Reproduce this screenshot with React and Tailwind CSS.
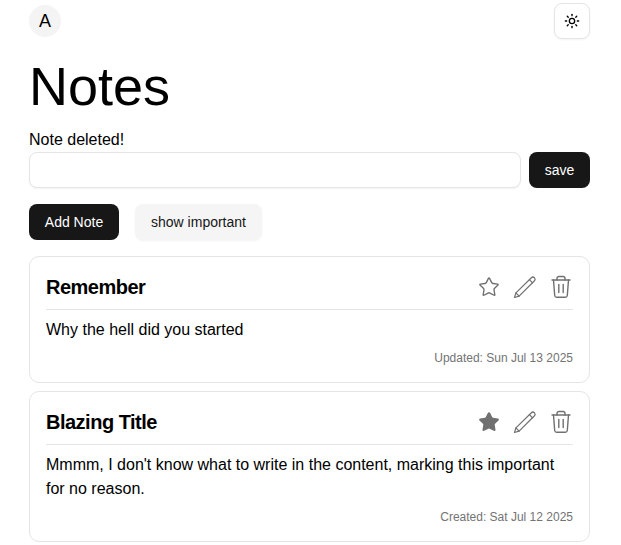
import React from 'react';
import { Sun, Star } from 'lucide-react';

const notes = [
  {
    title: 'Remember',
    content: "Why the hell did you started",
    date: 'Updated: Sun Jul 13 2025',
    important: false,
  },
  {
    title: 'Blazing Title',
    content: "Mmmm, I don't know what to write in the content, marking this important for no reason.",
    date: 'Created: Sat Jul 12 2025',
    important: true,
  },
];

const PencilIcon = () => (
  <svg width="24" height="24" viewBox="0 0 24 24" fill="none" stroke="currentColor" strokeWidth="1.2" strokeLinejoin="round" strokeLinecap="round">
    <path d="M1.5 22.5l1.4-4.6L18.4 2.7a2.2 2.2 0 0 1 3 0l.1.1a2.2 2.2 0 0 1 0 3L6.1 21.1Z" />
    <path d="M16.4 4.7l3.1 3.1" />
    <path d="M2.9 17.9l3.2 3.2" />
  </svg>
);

const TrashIcon = () => (
  <svg width="24" height="24" viewBox="0 0 24 24" fill="none" stroke="currentColor" strokeWidth="1.4" strokeLinejoin="round" strokeLinecap="round">
    <path d="M3 5h18" />
    <path d="M8 5V3.5a2 2 0 0 1 2-2h4a2 2 0 0 1 2 2V5" />
    <path d="M4.5 5l1.2 15.5a2 2 0 0 0 2 1.8h8.6a2 2 0 0 0 2-1.8L19.5 5" />
    <path d="M9.8 9.5v8" />
    <path d="M14.2 9.5v8" />
  </svg>
);

const NoteCard = ({ note }) => (
  <div className="border border-[#e5e5e5] rounded-[10px] px-4 pt-[11px] pb-4 bg-white">
    <div className="flex items-center justify-between h-[42px] pb-[4px] border-b border-[#e5e5e5]">
      <h2 className="text-[20px] font-bold tracking-tight text-black">{note.title}</h2>
      <div className="flex items-center gap-3 text-[#707070]">
        <Star className="m-px" size={22} strokeWidth={1.5} fill={note.important ? '#707070' : 'none'} />
        <PencilIcon />
        <TrashIcon />
      </div>
    </div>
    <p className="mt-2 text-[16px] leading-6 text-black">{note.content}</p>
    <p className="mt-2 text-[12px] leading-4 text-right text-[#737373]">{note.date}</p>
  </div>
);

export default function App() {
  return (
    <div className="h-[545px] overflow-hidden bg-white font-['Liberation_Sans',Arial,sans-serif] text-black">
      <div className="w-[561px] ml-[29px] pt-[3px]">
        <div className="flex items-center justify-between">
          <div className="w-8 h-8 rounded-full bg-[#f4f4f4] flex items-center justify-center text-[18px]">A</div>
          <button className="w-9 h-9 rounded-lg border border-[#e5e5e5] bg-white shadow-xs flex items-center justify-center">
            <Sun size={16} />
          </button>
        </div>

        <h1 className="mt-3 text-[54px] leading-[70px] font-normal">Notes</h1>

        <p className="mt-[7px] text-[16px] leading-6">Note deleted!</p>

        <div className="flex items-center gap-2">
          <input className="flex-1 h-9 rounded-lg border border-[#e5e5e5] bg-white shadow-xs" />
          <button className="h-9 w-[61px] rounded-lg bg-[#171717] text-white text-[14px]">save</button>
        </div>

        <div className="flex items-center gap-4 mt-4">
          <button className="h-9 w-[90px] rounded-lg bg-[#171717] text-white text-[14px]">Add Note</button>
          <button className="h-9 w-[127px] rounded-lg bg-[#f5f5f5] text-[#171717] text-[14px] shadow-xs">show important</button>
        </div>

        <div className="flex flex-col gap-2 mt-4">
          {notes.map((note) => <NoteCard key={note.title} note={note} />)}
        </div>
      </div>
    </div>
  );
}
